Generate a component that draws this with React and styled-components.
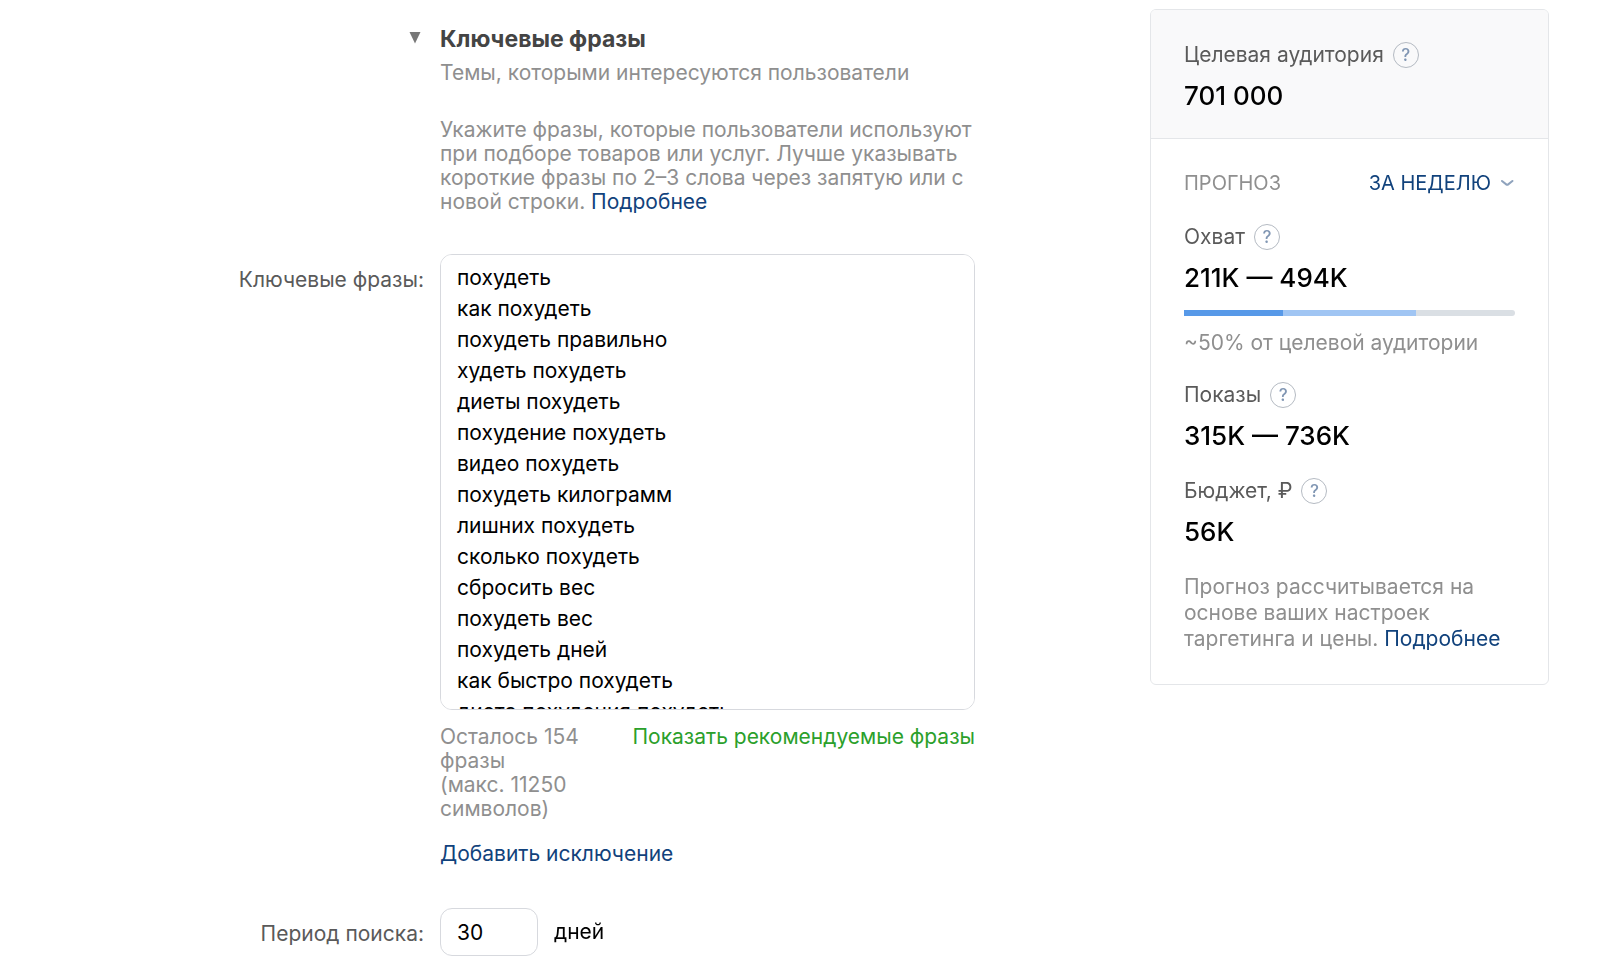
import React, { useState } from "react";
import styled, { createGlobalStyle } from "styled-components";

const GlobalStyle = createGlobalStyle`
  *, *::before, *::after {
    box-sizing: border-box;
  }
  body {
    margin: 0;
    background: #fff;
    color: #000;
    font-family: Inter, Roboto, sans-serif;
    font-size: 21px;
    line-height: 24px;
  }
  input, textarea, select, button {
    font: inherit;
    color: inherit;
  }
  h2, p {
    margin: 0;
  }
`;

const Page = styled.div`
  display: flex;
  align-items: flex-start;
  gap: 175px;
  padding: 9px 51px 16px 0;
`;

const Form = styled.main`
  flex: 1;
  min-width: 0;
  padding-top: 16px;
`;

const Row = styled.div`
  display: grid;
  grid-template-columns: minmax(200px, 424px) minmax(0, 1fr);
  column-gap: 16px;
  margin-top: ${(props) => props.$gap || 0}px;
`;

const ToggleCell = styled.div`
  display: flex;
  justify-content: flex-end;
  align-items: flex-start;
`;

const Toggle = styled.button`
  display: flex;
  padding: 7px 3px;
  border: 0;
  background: none;
  color: #777;
  cursor: pointer;
`;

const Title = styled.h2`
  font-size: 23px;
  font-weight: 700;
  line-height: 28px;
  color: #444;
`;

const Hint = styled.p`
  color: #8f8f8f;
  margin-top: ${(props) => props.$gap || 0}px;
`;

const Link = styled.a`
  color: ${(props) => (props.$green ? "#2ba02b" : "#11427c")};
  text-decoration: none;
  white-space: nowrap;
  &:hover {
    text-decoration: underline;
  }
`;

const Label = styled.label`
  padding-top: 14px;
  text-align: right;
  color: #5a5a5a;
`;

const Phrases = styled.textarea`
  display: block;
  width: 100%;
  height: 456px;
  padding: 7px 16px;
  border: 1px solid #d7d9de;
  border-radius: 12px;
  line-height: 31px;
  resize: none;
  outline: none;
  scrollbar-width: none;
`;

const Below = styled.div`
  display: flex;
  justify-content: space-between;
  align-items: flex-start;
  gap: 16px;
  margin: 15px 0 21px;
  .left {
    max-width: 160px;
    color: #8f8f8f;
  }
`;

const Period = styled.div`
  display: flex;
  align-items: center;
  gap: 16px;
  input {
    width: 98px;
    height: 48px;
    padding: 0 16px;
    border: 1px solid #d7d9de;
    border-radius: 12px;
    outline: none;
  }
`;

const Card = styled.aside`
  flex: 0 0 399px;
  border: 1px solid #e4e6e9;
  border-radius: 6px;
  overflow: hidden;
`;

const CardHead = styled.section`
  padding: 32px 33px 26px;
  background: #f9f9fa;
  border-bottom: 1px solid #e4e6e9;
`;

const CardBody = styled.section`
  padding: 32px 33px;
`;

const Stat = styled.div`
  margin-bottom: ${(props) => props.$gap || 0}px;
  .name {
    display: flex;
    align-items: center;
    gap: 9px;
    line-height: 26px;
    color: #5a5a5a;
  }
  .value {
    margin-top: 12px;
    font-size: 26px;
    font-weight: 500;
    line-height: 32px;
  }
`;

const HelpButton = styled.button`
  display: flex;
  align-items: center;
  justify-content: center;
  width: 26px;
  height: 26px;
  padding: 0;
  border: 1px solid #b4bac2;
  border-radius: 50%;
  background: none;
  font-size: 17px;
  font-weight: 500;
  line-height: 24px;
  color: #8096b3;
`;

const ForecastBar = styled.div`
  display: flex;
  align-items: center;
  justify-content: space-between;
  margin-bottom: 29px;
  font-size: 20px;
  color: #8f8f8f;
`;

const Range = styled.label`
  display: flex;
  align-items: center;
  gap: 10px;
  color: #11427c;
  select {
    field-sizing: content;
    appearance: none;
    padding: 0;
    border: 0;
    background: none;
    outline: none;
  }
`;

const Track = styled.div`
  display: flex;
  height: 6px;
  margin: 16px 0 14px;
  border-radius: 0 3px 3px 0;
  background: #dadfe4;
  overflow: hidden;
`;

const Fill = styled.div`
  background: ${(props) => (props.$light ? "#a0c5f3" : "#5799e8")};
`;

const Note = styled.p`
  color: #8f8f8f;
  line-height: 26px;
`;

const phrases = [
  "похудеть",
  "как похудеть",
  "похудеть правильно",
  "худеть похудеть",
  "диеты похудеть",
  "похудение похудеть",
  "видео похудеть",
  "похудеть килограмм",
  "лишних похудеть",
  "сколько похудеть",
  "сбросить вес",
  "похудеть вес",
  "похудеть дней",
  "как быстро похудеть",
  "диета похудения похудеть",
];

const reach = { min: 30, max: 70 };

function StatBlock({ name, value, gap, children }) {
  return (
    <Stat $gap={gap}>
      <div className="name">
        {name}
        <HelpButton type="button">?</HelpButton>
      </div>
      <div className="value">{value}</div>
      {children}
    </Stat>
  );
}

export default function App() {
  const [text, setText] = useState(phrases.join("\n"));
  const [days, setDays] = useState("30");

  return (
    <>
      <GlobalStyle />
      <Page>
        <Form>
          <Row>
            <ToggleCell>
              <Toggle type="button" aria-label="Ключевые фразы">
                <svg width="12" height="12" viewBox="0 0 12 12" fill="currentColor">
                  <path d="M0.5 0h11L6 11.5z" />
                </svg>
              </Toggle>
            </ToggleCell>
            <div>
              <Title>Ключевые фразы</Title>
              <Hint $gap={8}>Темы, которыми интересуются пользователи</Hint>
              <Hint $gap={33}>
                Укажите фразы, которые пользователи используют при подборе
                товаров или услуг. Лучше указывать короткие фразы по 2–3 слова
                через запятую или с новой строки. <Link href="#">Подробнее</Link>
              </Hint>
            </div>
          </Row>
          <Row $gap={40}>
            <Label htmlFor="phrases">Ключевые фразы:</Label>
            <div>
              <Phrases
                id="phrases"
                spellCheck="false"
                value={text}
                onChange={(e) => setText(e.target.value)}
              />
              <Below>
                <div className="left">
                  Осталось 154 фразы
                  <br />
                  (макс. 11250 символов)
                </div>
                <Link $green href="#">
                  Показать рекомендуемые фразы
                </Link>
              </Below>
              <Link href="#">Добавить исключение</Link>
            </div>
          </Row>
          <Row $gap={42}>
            <Label htmlFor="days">Период поиска:</Label>
            <Period>
              <input
                id="days"
                value={days}
                onChange={(e) => setDays(e.target.value)}
              />
              дней
            </Period>
          </Row>
        </Form>
        <Card>
          <CardHead>
            <StatBlock name="Целевая аудитория" value="701 000" />
          </CardHead>
          <CardBody>
            <ForecastBar>
              ПРОГНОЗ
              <Range>
                <select aria-label="Период прогноза">
                  <option>ЗА НЕДЕЛЮ</option>
                </select>
                <svg width="14" height="8" viewBox="0 0 14 8" fill="none">
                  <path
                    d="M1 2L5.2 5.4Q6.2 6.2 7.2 5.4L11.4 2"
                    stroke="#8fa3bd"
                    strokeWidth="2"
                    strokeLinecap="round"
                  />
                </svg>
              </Range>
            </ForecastBar>
            <StatBlock name="Охват" value="211K — 494K" gap={26}>
              <Track>
                <Fill style={{ width: `${reach.min}%` }} />
                <Fill $light style={{ width: `${reach.max - reach.min}%` }} />
              </Track>
              <Note>~50% от целевой аудитории</Note>
            </StatBlock>
            <StatBlock name="Показы" value="315K — 736K" gap={26} />
            <StatBlock name="Бюджет, ₽" value="56K" gap={26} />
            <Note>
              Прогноз рассчитывается на основе ваших настроек таргетинга и цены.{" "}
              <Link href="#">Подробнее</Link>
            </Note>
          </CardBody>
        </Card>
      </Page>
    </>
  );
}
